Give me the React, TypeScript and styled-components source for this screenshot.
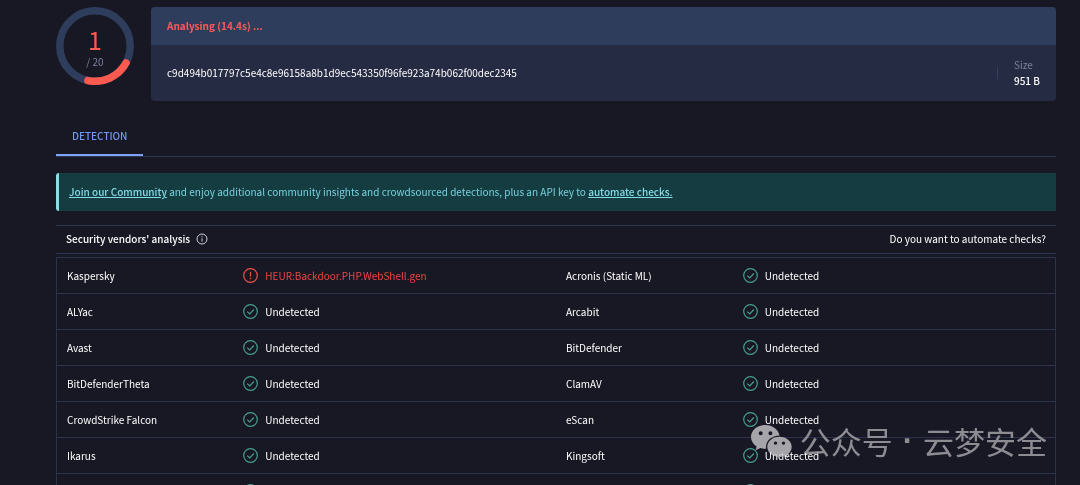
import React from "react";
import styled, { createGlobalStyle } from "styled-components";

const GlobalStyle = createGlobalStyle`
  *, *::before, *::after { box-sizing: border-box; }
  body {
    margin: 0;
    background: #181724;
    color: #ffffff;
    font-family: "Noto Sans CJK SC", "Noto Sans", sans-serif;
    font-size: 10px;
    font-weight: 400;
    line-height: 16px;
  }
`;

const Page = styled.div`
  position: relative;
  height: 100vh;
  overflow: hidden;
  padding: 7px 24px 0 56px;
`;

const Summary = styled.header`
  display: flex;
  align-items: flex-start;
  gap: 17px;
`;

const Score = styled.div`
  display: grid;
  flex: none;
  width: 78px;
  height: 78px;
  > * { grid-area: 1 / 1; }
`;

const ScoreText = styled.div`
  display: flex;
  flex-direction: column;
  align-items: center;
  padding-top: 17px;
`;

const ScoreValue = styled.span`
  color: #ff5a50;
  font-size: 25px;
  line-height: 30px;
`;

const ScoreTotal = styled.span`
  color: #7b839d;
  line-height: 16px;
`;

const FileCard = styled.section`
  flex: 1;
  min-width: 0;
  overflow: hidden;
  border-radius: 4px;
  background: #252b43;
`;

const FileStatus = styled.div`
  padding: 11px 16px;
  background: #2f3d5c;
  color: #ff5a5a;
  font-weight: 700;
`;

const FileBody = styled.div`
  display: flex;
  align-items: center;
  justify-content: space-between;
  padding: 12px 16px;
`;

const FileSize = styled.div`
  display: flex;
  align-items: center;
  gap: 16px;
`;

const Divider = styled.span`
  width: 1px;
  height: 12px;
  background: #34405f;
`;

const SizeLabel = styled.div`
  color: #7b839d;
`;

const SizeValue = styled.div`
  font-weight: 500;
`;

const Tabs = styled.nav`
  display: flex;
  margin-top: 15px;
  border-bottom: 1px solid #2b3852;
`;

const Tab = styled.button`
  padding: 12px 16px 10px;
  border: 0;
  border-bottom: 2px solid #7da2f8;
  background: none;
  color: #7299f2;
  font: inherit;
  font-weight: 500;
`;

const Banner = styled.p`
  margin: 16px 0 0;
  padding: 11px 10px;
  border-left: 3px solid #8bdde5;
  border-radius: 3px 0 0 3px;
  background: #153c40;
  color: #76d2de;
`;

const BannerLink = styled.a`
  color: #85dce8;
  font-weight: 500;
`;

const SectionBar = styled.div`
  display: flex;
  align-items: center;
  justify-content: space-between;
  margin: 14px 0 3px;
  padding: 5px 10px 6px;
  border: solid #2b3852;
  border-width: 1px 0;
`;

const SectionTitle = styled.h2`
  display: flex;
  align-items: center;
  gap: 6px;
  margin: 0;
  font-size: 10px;
  font-weight: 500;
`;

const TextLink = styled.a`
  color: inherit;
  text-decoration: none;
`;

const Results = styled.table`
  width: 100%;
  border: 1px solid #2a324c;
  border-collapse: collapse;
  table-layout: fixed;
`;

const Row = styled.tr`
  height: 36px;
  border-bottom: 1px solid #2a324c;
`;

const Vendor = styled.th`
  width: 17.6%;
  padding: 0 10px;
  font-weight: 400;
  text-align: left;
`;

const Cell = styled.td`
  padding: 0 11px;
`;

const Verdict = styled.span<{ $bad?: boolean }>`
  display: flex;
  align-items: center;
  gap: 7px;
  color: ${(p) => (p.$bad ? "#f04444" : "inherit")};
`;

const Watermark = styled.div`
  position: absolute;
  right: 33px;
  bottom: 23px;
  display: flex;
  align-items: center;
  gap: 8px;
  color: #8d8c93;
  font-size: 31px;
  line-height: 42px;
  mix-blend-mode: lighten;
`;

const WatermarkText = styled.span`
  display: flex;
  gap: 10px;
`;

const Dot = styled.span`
  font-family: "Liberation Sans", sans-serif;
  font-weight: 700;
`;

const Ring = () => (
  <svg width="78" height="78" viewBox="0 0 78 78" fill="none" strokeWidth="7.5">
    <circle cx="39" cy="39" r="35.2" stroke="#2f3d5c" />
    <path d="M70 56A35.3 35.3 0 0 1 32 73.6" stroke="#ff5a50" strokeLinecap="round" />
  </svg>
);

const InfoIcon = () => (
  <svg width="12" height="12" viewBox="0 0 12 12" fill="none" stroke="#d0d0d8">
    <circle cx="6" cy="6" r="5" />
    <path d="M6 5.3V8.6M6 3.2V4.3" />
  </svg>
);

const CheckIcon = () => (
  <svg width="15" height="15" viewBox="0 0 15 15" fill="none" stroke="#479d8e" strokeWidth="1.2">
    <circle cx="7.5" cy="7.5" r="6.8" />
    <path d="M4.2 7.6L6.7 9.9L10.9 5.5" />
  </svg>
);

const AlertIcon = () => (
  <svg width="15" height="15" viewBox="0 0 15 15" fill="none" stroke="#ed5047" strokeWidth="1.2">
    <circle cx="7.5" cy="7.5" r="6.8" />
    <path d="M7.5 3.8V8.6M7.5 9.8V11.2" />
  </svg>
);

const ChatIcon = () => (
  <svg width="41" height="34" viewBox="0 0 41 34" fill="#a5a4a9">
    <path
      fillRule="evenodd"
      d="M14.5 1C6.500 1 0 6.200 0 13C0 16.900 2.100 20.200 5.600 22.500L4.600 26.200L9.400 24C11.300 24.600 13 24.800 15.200 24.700C14 17.500 20 11.600 28.600 11.500C27.200 5.500 21.500 1 14.500 1ZM9.700 7.300A2 2 0 1 1 9.700 11.300A2 2 0 1 1 9.700 7.300ZM19.400 7.300A2 2 0 1 1 19.400 11.300A2 2 0 1 1 19.400 7.300Z"
    />
    <path
      fillRule="evenodd"
      d="M28.500 12.700C21.500 12.700 16.300 17.200 16.300 22.800C16.300 28.500 21.600 32.900 28.500 32.900C30.200 32.900 31.700 32.600 33.100 32.200L37 34L36.100 30.800C39 28.900 40.700 26.100 40.700 22.800C40.700 17.200 35.400 12.700 28.500 12.700ZM24.500 17.400A1.700 1.700 0 1 1 24.500 20.800A1.700 1.700 0 1 1 24.500 17.400ZM32.500 17.400A1.700 1.700 0 1 1 32.500 20.800A1.700 1.700 0 1 1 32.500 17.400Z"
    />
  </svg>
);

interface Result {
  vendor: string;
  verdict: string;
  bad?: boolean;
}

const clean = (vendor: string): Result => ({ vendor, verdict: "Undetected" });
const pending: Result = { vendor: "", verdict: "" };

const rows: [Result, Result][] = [
  [{ vendor: "Kaspersky", verdict: "HEUR:Backdoor.PHP.WebShell.gen", bad: true }, clean("Acronis (Static ML)")],
  [clean("ALYac"), clean("Arcabit")],
  [clean("Avast"), clean("BitDefender")],
  [clean("BitDefenderTheta"), clean("ClamAV")],
  [clean("CrowdStrike Falcon"), clean("eScan")],
  [clean("Ikarus"), clean("Kingsoft")],
  [pending, pending],
];

const ResultCells = ({ vendor, verdict, bad }: Result) => (
  <>
    <Vendor scope="row">{vendor}</Vendor>
    <Cell>
      <Verdict $bad={bad}>
        {bad ? <AlertIcon /> : <CheckIcon />}
        {verdict}
      </Verdict>
    </Cell>
  </>
);

export default function App() {
  return (
    <Page>
      <GlobalStyle />
      <Summary>
        <Score>
          <Ring />
          <ScoreText>
            <ScoreValue>1</ScoreValue>
            <ScoreTotal>/ 20</ScoreTotal>
          </ScoreText>
        </Score>
        <FileCard>
          <FileStatus>Analysing (14.4s) ...</FileStatus>
          <FileBody>
            <span>c9d494b017797c5e4c8e96158a8b1d9ec543350f96fe923a74b062f00dec2345</span>
            <FileSize>
              <Divider />
              <div>
                <SizeLabel>Size</SizeLabel>
                <SizeValue>951 B</SizeValue>
              </div>
            </FileSize>
          </FileBody>
        </FileCard>
      </Summary>
      <Tabs>
        <Tab type="button">DETECTION</Tab>
      </Tabs>
      <Banner>
        <BannerLink href="#community">Join our Community</BannerLink> and enjoy additional community insights and
        crowdsourced detections, plus an API key to <BannerLink href="#automate">automate checks.</BannerLink>
      </Banner>
      <SectionBar>
        <SectionTitle>
          Security vendors' analysis <InfoIcon />
        </SectionTitle>
        <TextLink href="#automate">Do you want to automate checks?</TextLink>
      </SectionBar>
      <Results>
        <tbody>
          {rows.map(([left, right], i) => (
            <Row key={i}>
              <ResultCells {...left} />
              <ResultCells {...right} />
            </Row>
          ))}
        </tbody>
      </Results>
      <Watermark>
        <ChatIcon />
        <WatermarkText>
          <span>公众号</span>
          <Dot>·</Dot>
          <span>云梦安全</span>
        </WatermarkText>
      </Watermark>
    </Page>
  );
}
